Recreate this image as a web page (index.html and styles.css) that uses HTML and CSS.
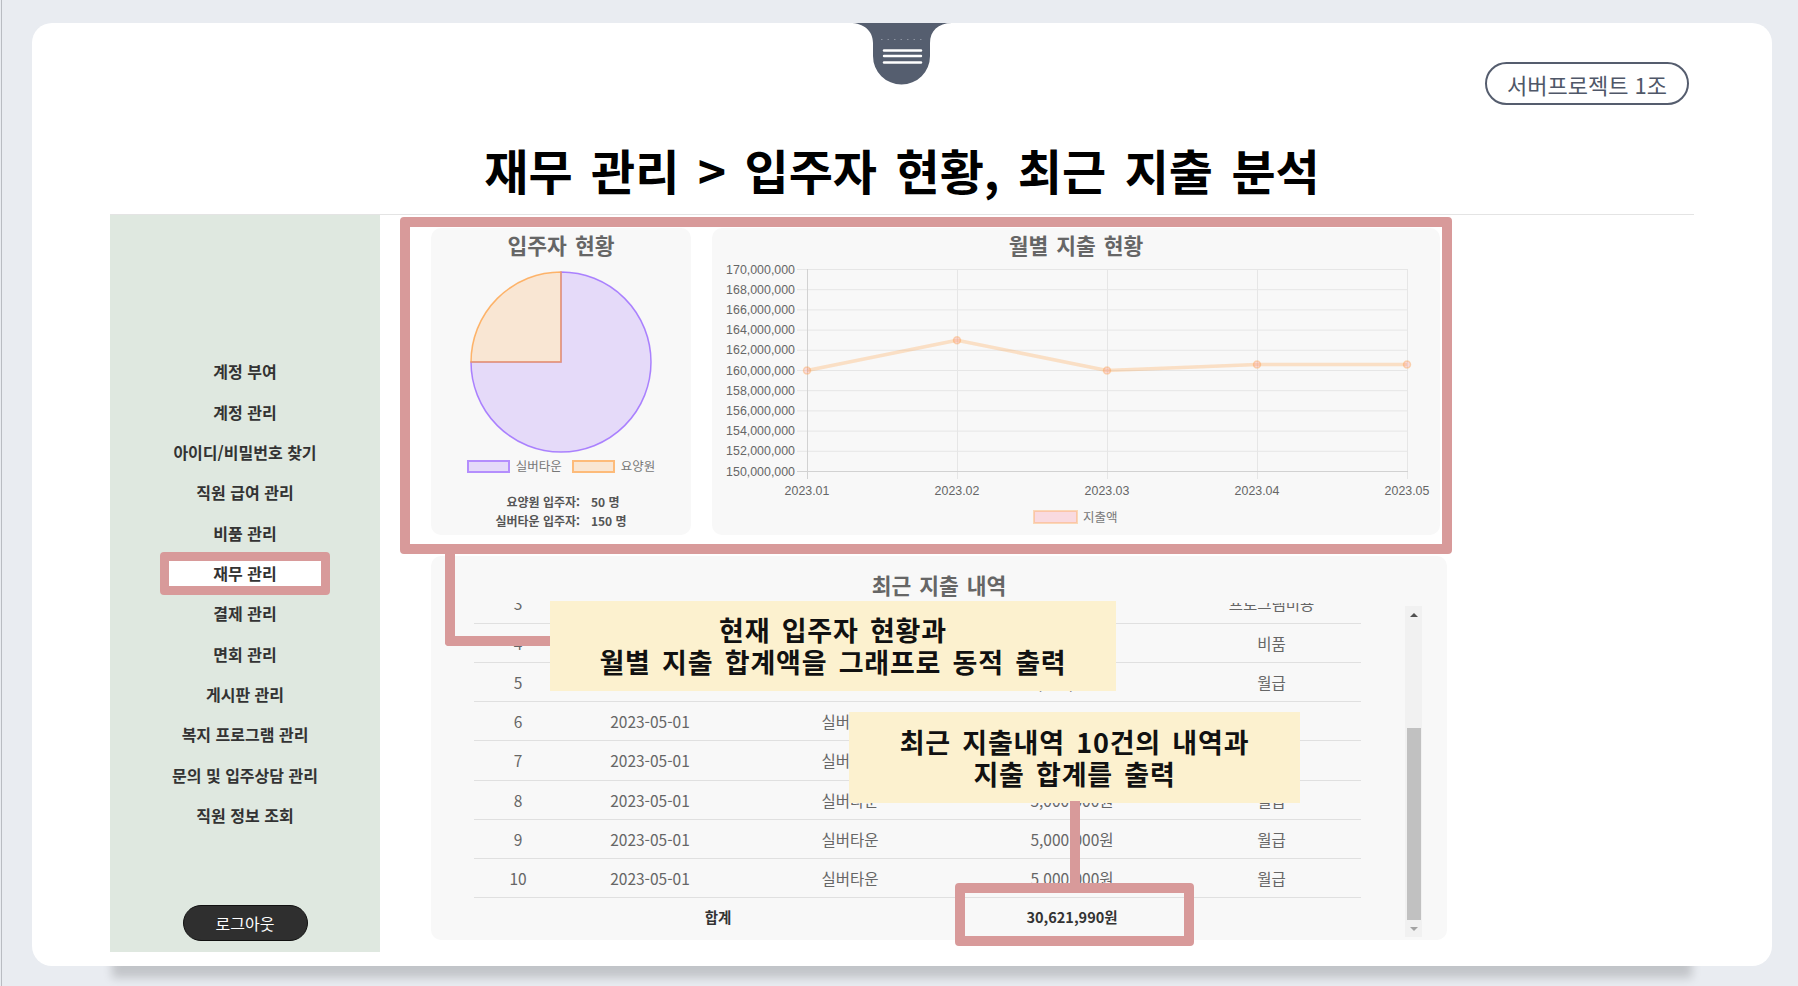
FILE: index.html
```html
<!DOCTYPE html>
<html lang="ko">
<head>
<meta charset="utf-8">
<title>재무 관리 - 입주자 현황, 최근 지출 분석</title>
<link rel="stylesheet" href="styles.css">
</head>
<body>
<div class="screen">
  <div class="card">
    <div class="tab">
      <svg width="102" height="62" viewBox="0 0 102 62">
        <path d="M0 0 H102 C88 0 80 8 80 20 V33 A28.5 28.5 0 0 1 23 33 V20 C23 8 14 0 0 0 Z" fill="#555e6f"/>
        <line x1="31" y1="16.5" x2="73" y2="16.5" stroke="#8c93a0" stroke-width="1" stroke-dasharray="1.5 5"/>
        <line x1="34" y1="27.5" x2="71" y2="27.5" stroke="#fff" stroke-width="2.4" stroke-linecap="round"/>
        <line x1="34" y1="33" x2="71" y2="33" stroke="#fff" stroke-width="2.4" stroke-linecap="round"/>
        <line x1="34" y1="39.5" x2="71" y2="39.5" stroke="#fff" stroke-width="2.4" stroke-linecap="round"/>
      </svg>
    </div>
    <header class="header">
      <div class="badge-row"><span class="badge">서버프로젝트 1조</span></div>
      <h1 class="title">재무 관리 &gt; 입주자 현황, 최근 지출 분석</h1>
    </header>
    <div class="content">
      <aside class="sidebar">
        <nav class="menu">
          <a class="menu-item">계정 부여</a>
          <a class="menu-item">계정 관리</a>
          <a class="menu-item">아이디/비밀번호 찾기</a>
          <a class="menu-item">직원 급여 관리</a>
          <a class="menu-item">비품 관리</a>
          <a class="menu-item active">재무 관리</a>
          <a class="menu-item">결제 관리</a>
          <a class="menu-item">면회 관리</a>
          <a class="menu-item">게시판 관리</a>
          <a class="menu-item">복지 프로그램 관리</a>
          <a class="menu-item">문의 및 입주상담 관리</a>
          <a class="menu-item">직원 정보 조회</a>
        </nav>
        <button class="logout">로그아웃</button>
      </aside>
      <main class="main">
        <div class="charts">
          <section class="panel pie-panel">
            <h2 class="panel-title">입주자 현황</h2>
            <svg class="pie" width="184" height="184" viewBox="0 0 184 184">
              <path d="M92 92 L92 2 A90 90 0 1 1 2 92 Z" fill="rgba(153,102,255,0.2)" stroke="rgba(153,102,255,0.8)" stroke-width="1.5"/>
              <path d="M92 92 L2 92 A90 90 0 0 1 92 2 Z" fill="rgba(255,159,64,0.2)" stroke="rgba(255,159,64,0.75)" stroke-width="1.5"/>
            </svg>
            <div class="legend">
              <span class="legend-item"><i class="swatch swatch-purple"></i>실버타운</span>
              <span class="legend-item"><i class="swatch swatch-orange"></i>요양원</span>
            </div>
            <dl class="stats">
              <dt>요양원 입주자:</dt><dd>50 명</dd>
              <dt>실버타운 입주자:</dt><dd>150 명</dd>
            </dl>
          </section>
          <section class="panel line-panel">
            <h2 class="panel-title">월별 지출 현황</h2>
            <svg class="line-chart" width="728" height="271" viewBox="0 0 728 271">
              <g stroke="#e6e6e6" stroke-width="1">
                <line x1="85" y1="5.5" x2="695" y2="5.5"/>
                <line x1="85" y1="25.7" x2="695" y2="25.7"/>
                <line x1="85" y1="45.9" x2="695" y2="45.9"/>
                <line x1="85" y1="66.1" x2="695" y2="66.1"/>
                <line x1="85" y1="86.3" x2="695" y2="86.3"/>
                <line x1="85" y1="106.5" x2="695" y2="106.5"/>
                <line x1="85" y1="126.7" x2="695" y2="126.7"/>
                <line x1="85" y1="146.9" x2="695" y2="146.9"/>
                <line x1="85" y1="167.1" x2="695" y2="167.1"/>
                <line x1="85" y1="187.3" x2="695" y2="187.3"/>
                <line x1="245.5" y1="5" x2="245.5" y2="215"/>
                <line x1="395.5" y1="5" x2="395.5" y2="215"/>
                <line x1="545.5" y1="5" x2="545.5" y2="215"/>
                <line x1="695.5" y1="5" x2="695.5" y2="215"/>
              </g>
              <g stroke="#d2d2d2" stroke-width="1">
                <line x1="85" y1="207.5" x2="696" y2="207.5"/>
                <line x1="95.5" y1="5" x2="95.5" y2="215"/>
              </g>
              <g font-family="Liberation Sans, Arial, sans-serif" font-size="12.4" fill="#666" text-anchor="end">
                <text x="83" y="9.5">170,000,000</text>
                <text x="83" y="29.7">168,000,000</text>
                <text x="83" y="49.9">166,000,000</text>
                <text x="83" y="70.1">164,000,000</text>
                <text x="83" y="90.3">162,000,000</text>
                <text x="83" y="110.5">160,000,000</text>
                <text x="83" y="130.7">158,000,000</text>
                <text x="83" y="150.9">156,000,000</text>
                <text x="83" y="171.1">154,000,000</text>
                <text x="83" y="191.3">152,000,000</text>
                <text x="83" y="211.5">150,000,000</text>
              </g>
              <g font-family="Liberation Sans, Arial, sans-serif" font-size="12.4" fill="#666" text-anchor="middle">
                <text x="95" y="231">2023.01</text>
                <text x="245" y="231">2023.02</text>
                <text x="395" y="231">2023.03</text>
                <text x="545" y="231">2023.04</text>
                <text x="695" y="231">2023.05</text>
              </g>
              <polyline points="95,106.5 245,76.2 395,106.5 545,100.5 695,100.5" fill="none" stroke="rgba(255,159,64,0.28)" stroke-width="3.5" stroke-linejoin="round"/>
              <g fill="rgba(255,120,110,0.22)" stroke="rgba(255,159,64,0.35)" stroke-width="1.5">
                <circle cx="95" cy="106.5" r="3.5"/>
                <circle cx="245" cy="76.2" r="3.5"/>
                <circle cx="395" cy="106.5" r="3.5"/>
                <circle cx="545" cy="100.5" r="3.5"/>
                <circle cx="695" cy="100.5" r="3.5"/>
              </g>
              <rect x="322" y="247" width="43" height="12" fill="rgba(255,99,132,0.2)" stroke="rgba(255,159,64,0.35)" stroke-width="2"/>
              <text x="371" y="257.5" font-family="Noto Sans CJK KR, sans-serif" font-size="12.5" fill="#777">지출액</text>
            </svg>
          </section>
        </div>
        <section class="panel expense-panel">
          <h2 class="panel-title">최근 지출 내역</h2>
          <div class="table-wrap">
            <div class="table-scroll">
              <table class="expense-table">
                <colgroup><col class="c1"><col class="c2"><col class="c3"><col class="c4"><col class="c5"></colgroup>
                <tbody>
                  <tr><td>1</td><td>2023-05-03</td><td>요양원</td><td>200,000원</td><td>식자재</td></tr>
                  <tr><td>2</td><td>2023-05-02</td><td>요양원</td><td>150,000원</td><td>관리비</td></tr>
                  <tr><td>3</td><td>2023-05-01</td><td>실버타운</td><td>171,990원</td><td>프로그램비용</td></tr>
                  <tr><td>4</td><td>2023-05-01</td><td>요양원</td><td>100,000원</td><td>비품</td></tr>
                  <tr><td>5</td><td>2023-05-01</td><td>요양원</td><td>5,000,000원</td><td>월급</td></tr>
                  <tr><td>6</td><td>2023-05-01</td><td>실버타운</td><td>5,000,000원</td><td>월급</td></tr>
                  <tr><td>7</td><td>2023-05-01</td><td>실버타운</td><td>5,000,000원</td><td>월급</td></tr>
                  <tr><td>8</td><td>2023-05-01</td><td>실버타운</td><td>5,000,000원</td><td>월급</td></tr>
                  <tr><td>9</td><td>2023-05-01</td><td>실버타운</td><td>5,000,000원</td><td>월급</td></tr>
                  <tr><td>10</td><td>2023-05-01</td><td>실버타운</td><td>5,000,000원</td><td>월급</td></tr>
                  <tr class="total"><td colspan="3">합계</td><td>30,621,990원</td><td></td></tr>
                </tbody>
              </table>
            </div>
            <div class="scrollbar">
              <span class="sb-btn sb-up"></span>
              <span class="sb-track"><span class="sb-thumb"></span></span>
              <span class="sb-btn sb-down"></span>
            </div>
          </div>
        </section>

        <div class="note-frame"></div>
        <div class="note-link note-link-1"></div>
        <div class="callout callout-1">현재 입주자 현황과<br>월별 지출 합계액을 그래프로 동적 출력</div>
        <div class="callout callout-2">최근 지출내역 10건의 내역과<br>지출 합계를 출력</div>
        <div class="note-link note-link-2"></div>
        <div class="note-total"></div>
      </main>
    </div>
  </div>
</div>
</body>
</html>
```

FILE: styles.css
```css
*, *::before, *::after { box-sizing: border-box; }

html, body {
  margin: 0;
  padding: 0;
}

body {
  background: #e9ecf1;
  font-family: "Noto Sans CJK KR", "Noto Sans", sans-serif;
  color: #333;
}

.screen {
  width: 1797px;
  height: 986px;
  margin-left: 1px;
  border-left: 1px solid #b9bcc2;
  padding: 23px 0 0 30px;
  overflow: hidden;
}

.card {
  position: relative;
  width: 1740px;
  height: 943px;
  background: #fff;
  border-radius: 20px;
  display: flex;
  flex-direction: column;
  padding-bottom: 14px;
}

.card::after {
  content: "";
  position: absolute;
  left: 80px;
  right: 80px;
  bottom: 0;
  height: 30px;
  box-shadow: 0 12px 10px rgba(0, 0, 0, 0.17);
  z-index: -1;
}

.tab {
  position: absolute;
  left: 818px;
  top: 0;
  width: 102px;
  height: 62px;
  line-height: 0;
}

/* header */
.header {
  height: 191px;
  padding: 39px 83px 0;
  display: flex;
  flex-direction: column;
}

.badge-row {
  display: flex;
  justify-content: flex-end;
}

.badge {
  width: 204px;
  height: 43px;
  border: 2px solid #555d6e;
  border-radius: 22px;
  display: flex;
  align-items: center;
  justify-content: center;
  font-size: 22px;
  color: #4f5768;
}

.title {
  margin: 36px 0 0;
  text-align: center;
  font-size: 48px;
  line-height: 56px;
  font-weight: 700;
  word-spacing: 5px;
  color: #000;
}

/* content */
.content {
  margin: 0 78px;
  border-top: 1px solid #e4e4e4;
  display: flex;
  height: 738px;
}

.sidebar {
  width: 270px;
  flex: none;
  background: #dfe8e0;
  display: flex;
  flex-direction: column;
  align-items: center;
  padding: 136px 0 11px;
}

.menu {
  display: flex;
  flex-direction: column;
  width: 100%;
}

.menu-item {
  position: relative;
  z-index: 0;
  height: 40.35px;
  display: flex;
  align-items: center;
  justify-content: center;
  font-size: 16px;
  font-weight: 700;
  color: #333;
}

.menu-item.active::before {
  content: "";
  position: absolute;
  left: 50%;
  width: 170px;
  top: -1px;
  bottom: -2px;
  transform: translateX(-50%);
  background: #fff;
  border: 9px solid #d89a9a;
  border-radius: 4px;
  z-index: -1;
}

.logout {
  margin-top: auto;
  width: 125px;
  height: 36px;
  border: 1px solid #111;
  border-radius: 18px;
  background: #2f2f2f;
  color: #fff;
  font-family: "Noto Sans CJK KR", sans-serif;
  font-size: 16px;
  padding: 0;
}

/* main */
.main {
  position: relative;
  flex: 1;
  padding: 13px 0 0 51px;
}

.charts {
  display: flex;
  gap: 21px;
}

.panel {
  background: #f8f8f8;
  border-radius: 10px;
}

.panel-title {
  margin: 0;
  text-align: center;
  font-size: 21.5px;
  line-height: 28px;
  font-weight: 700;
  word-spacing: 2px;
  color: #666;
}

.pie-panel {
  width: 260px;
  height: 307px;
  padding-top: 3px;
  display: flex;
  flex-direction: column;
  align-items: center;
}

.pie {
  margin-top: 11px;
  display: block;
}

.legend {
  margin-top: 5px;
  display: flex;
  gap: 10px;
  font-size: 12.5px;
  line-height: 14px;
  color: #777;
}

.legend-item {
  display: flex;
  align-items: center;
  gap: 6px;
}

.swatch {
  display: block;
  width: 43px;
  height: 13px;
}

.swatch-purple {
  background: rgba(153, 102, 255, 0.2);
  border: 2px solid rgba(153, 102, 255, 0.65);
}

.swatch-orange {
  background: rgba(255, 159, 64, 0.2);
  border: 2px solid rgba(255, 159, 64, 0.6);
}

.stats {
  margin: 19px 0 0;
  display: grid;
  grid-template-columns: auto auto;
  column-gap: 11px;
  font-size: 12px;
  line-height: 19px;
  font-weight: 700;
  color: #555;
}

.stats dt { text-align: right; }
.stats dd { margin: 0; }

.line-panel {
  width: 728px;
  height: 307px;
  padding-top: 3px;
}

.line-chart {
  display: block;
  margin-top: 5px;
}

.expense-panel {
  width: 1016px;
  height: 384px;
  margin-top: 21px;
  padding-top: 15px;
}

.table-wrap {
  margin-top: 4px;
  display: flex;
  padding-left: 43px;
}

.table-scroll {
  width: 931px;
  height: 334px;
  overflow: hidden;
}

.expense-table {
  width: 887px;
  margin-top: -97.75px;
  border-collapse: collapse;
  table-layout: fixed;
  font-size: 15.5px;
  color: #666;
}

.expense-table .c1 { width: 88px; }
.expense-table .c2 { width: 176px; }
.expense-table .c3 { width: 224px; }
.expense-table .c4 { width: 220px; }
.expense-table .c5 { width: 179px; }

.expense-table td {
  height: 39.25px;
  padding: 0;
  text-align: center;
  vertical-align: middle;
  border-bottom: 1px solid #e0e0e0;
  line-height: 20px;
}

.expense-table .total td {
  font-weight: 700;
  color: #333;
  font-size: 14.5px;
}

.scrollbar {
  margin-top: 3px;
  width: 17px;
  height: 331px;
  background: #f1f1f1;
  display: flex;
  flex-direction: column;
}

.sb-btn {
  height: 17px;
  display: flex;
  align-items: center;
  justify-content: center;
}

.sb-up::after {
  content: "";
  border-left: 4px solid transparent;
  border-right: 4px solid transparent;
  border-bottom: 4px solid #505050;
}

.sb-down::after {
  content: "";
  border-left: 4px solid transparent;
  border-right: 4px solid transparent;
  border-top: 4px solid #a3a3a3;
}

.sb-track {
  flex: 1;
  display: flex;
  flex-direction: column;
  justify-content: flex-end;
  align-items: center;
}

.sb-thumb {
  width: 14px;
  height: 192px;
  background: #c1c1c1;
}

/* annotations */
.note-frame {
  position: absolute;
  left: 20px;
  top: 2px;
  width: 1052px;
  height: 337px;
  border: 10px solid #d89a9a;
  border-radius: 4px;
}

.note-link {
  position: absolute;
  background: transparent;
}

.note-link-1 {
  left: 65px;
  top: 337px;
  width: 110px;
  height: 94px;
  border-left: 10px solid #d89a9a;
  border-bottom: 10px solid #d89a9a;
  border-bottom-left-radius: 4px;
}

.note-link-2 {
  left: 690px;
  top: 586px;
  width: 10px;
  height: 84px;
  background: #d89a9a;
}

.callout {
  position: absolute;
  display: flex;
  align-items: center;
  justify-content: center;
  text-align: center;
  background: #fcf1cf;
  color: #111;
  font-size: 27px;
  line-height: 32px;
  font-weight: 700;
  letter-spacing: 0.8px;
  word-spacing: 3px;
}

.callout-1 {
  left: 170px;
  top: 386px;
  width: 566px;
  height: 90px;
}

.callout-2 {
  left: 469px;
  top: 497px;
  width: 451px;
  height: 91px;
}

.note-total {
  position: absolute;
  left: 575px;
  top: 668px;
  width: 239px;
  height: 63px;
  border: 10px solid #d89a9a;
  border-radius: 4px;
}
```
